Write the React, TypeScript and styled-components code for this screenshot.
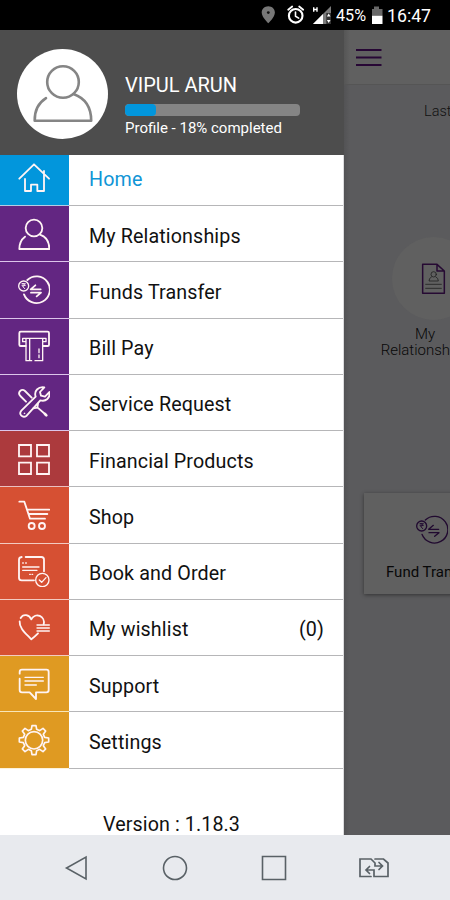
import React from "react";
import styled, { createGlobalStyle } from "styled-components";

const GlobalStyle = createGlobalStyle`
  * { box-sizing: border-box; }
  body { margin: 0; background: #000; font-family: Roboto, "Liberation Sans", sans-serif; }
`;

const Phone = styled.div`
  width: 450px;
  height: 900px;
  display: flex;
  flex-direction: column;
  overflow: hidden;
`;

const StatusBar = styled.header`
  height: 30px;
  flex: none;
  display: flex;
  align-items: center;
  background: #000;
  color: #fff;
  padding-left: 261px;
`;

const StatusText = styled.span<{ $width: number; $size: number }>`
  width: ${(p) => p.$width}px;
  font-size: ${(p) => p.$size}px;
  line-height: 30px;
  white-space: nowrap;
  padding-top: 2px;
`;

const Screen = styled.main`
  height: 805px;
  flex: none;
  display: flex;
`;

const Drawer = styled.aside`
  width: 344px;
  flex: none;
  display: flex;
  flex-direction: column;
  background: #fff;
  overflow: hidden;
`;

const Profile = styled.section`
  height: 125px;
  flex: none;
  display: flex;
  background: #4d4d4d;
  color: #fff;
  padding: 19px 0 0 17px;
`;

const Avatar = styled.div`
  width: 91px;
  height: 90px;
  border-radius: 50%;
  background: #fff;
`;

const ProfileInfo = styled.div`
  padding: 24px 0 0 17px;
`;

const Name = styled.div`
  font-size: 20px;
  line-height: 24px;
  height: 31px;
`;

const Track = styled.div`
  width: 175px;
  height: 12px;
  border-radius: 4px;
  background: #858585;
  overflow: hidden;
`;

const Progress = styled.div`
  width: 31px;
  height: 12px;
  border-radius: 4px;
  background: #0296dc;
`;

const Completed = styled.div`
  font-size: 15px;
  line-height: 18px;
  margin-top: 3px;
`;

const Menu = styled.nav`
  flex: none;
  overflow: hidden;
  border-right: 1px solid #dcdcde;
`;

const Row = styled.div`
  height: 56.25px;
  display: flex;
  &:first-child { margin-top: -5.25px; }
`;

const Tile = styled.div<{ $color: string; $line: string }>`
  width: 69px;
  display: flex;
  justify-content: center;
  align-items: center;
  padding-right: 1px;
  background: ${(p) => p.$color};
  border-bottom: 1px solid ${(p) => p.$line};
`;

const Label = styled.div<{ $active?: boolean }>`
  flex: 1;
  display: flex;
  justify-content: space-between;
  align-items: center;
  padding: 5px 19px 0 20px;
  font-size: 19.7px;
  letter-spacing: 0.12px;
  color: ${(p) => (p.$active ? "#1095d6" : "#111")};
  border-bottom: 1px solid #b6b6b8;
`;

const Version = styled.div`
  flex: 1;
  padding-top: 44px;
  text-align: center;
  font-size: 19.7px;
  line-height: 24px;
  letter-spacing: 0.1px;
  color: #111;
  border-right: 1px solid #dcdcde;
`;

const Backdrop = styled.section`
  flex: 1;
  min-width: 0;
  overflow: hidden;
  background: linear-gradient(90deg, #535355 0, #5b5b5d 6px);
`;

const AppBar = styled.div`
  height: 55px;
  padding: 18px 0 0 12px;
  background: linear-gradient(90deg, #565656 0, #606060 6px);
  border-bottom: 1px solid #555;
`;

const LastLogin = styled.div`
  padding: 18px 0 0 80px;
  height: 152px;
  font-size: 14.5px;
  line-height: 18px;
  font-weight: 300;
  white-space: nowrap;
  color: #111;
`;

const Shortcut = styled.div`
  width: 83px;
  height: 83px;
  border-radius: 50%;
  margin-left: 48px;
  background: #606060;
  display: flex;
  align-items: center;
  justify-content: center;
`;

const ShortcutText = styled.div`
  width: 100px;
  margin-left: 31px;
  padding-top: 6px;
  height: 173px;
  text-align: center;
  font-size: 15px;
  font-weight: 300;
  line-height: 16px;
  color: #080808;
`;

const Card = styled.div`
  width: 136px;
  height: 101px;
  margin-left: 20px;
  padding-top: 21px;
  background: #606060;
  box-shadow: 0 1px 4px rgba(0, 0, 0, 0.45);
  display: flex;
  flex-direction: column;
  align-items: center;
  font-size: 15px;
  color: #080808;
`;

const CardText = styled.div`
  line-height: 18px;
  padding-top: 17px;
  white-space: nowrap;
`;

const NavBar = styled.footer`
  height: 65px;
  flex: none;
  display: flex;
  align-items: center;
  justify-content: space-between;
  padding: 0 60px 0 61px;
  background: #e8eaee;
`;

const Glyph = styled.svg`
  display: block;
  flex: none;
  fill: none;
  stroke: currentColor;
  stroke-linecap: round;
  stroke-linejoin: round;
`;

const TileGlyph = styled(Glyph)`
  color: #fff4f4;
  stroke-width: 5.5;
`;

const TransferArt = () => (
  <>
    <path d="M83 55A40 40 0 1 1 73 98" />
    <circle cx="72" cy="73" r="15" strokeWidth="4" />
    <path d="M67 66h10M67 71h10M69 66c8 0 8 8 0 8l6 7" strokeWidth="2.8" />
    <path d="M123 83H93l14-12M94 93h30l-13 11" />
  </>
);

type Item = {
  label: string;
  color: string;
  line: string;
  top: number;
  art: React.ReactNode;
  count?: string;
};

const purple = { color: "#632682", line: "#dcc6ea" };
const orange = { color: "#d65033", line: "#f3cbc2" };
const amber = { color: "#df9a22", line: "#f8e6b8" };

const items: Item[] = [
  {
    label: "Home", color: "#0296dc", line: "#b3cce5", top: 34,
    art: <path d="M59 87 103 44l45 43M133 73v51h-20v-19H94v19H76V88M133 64v10" />,
  },
  {
    label: "My Relationships", ...purple, top: 204,
    art: (
      <>
        <circle cx="103" cy="234" r="25" />
        <path d="M76 260c-12 9-17 21-17 37h90c0-22-10-37-28-43" />
      </>
    ),
  },
  { label: "Funds Transfer", ...purple, top: 37, art: <TransferArt /> },
  {
    label: "Bill Pay", ...purple, top: 206,
    art: (
      <>
        <path d="M78 254H63q-4 0-4-4v-35q0-4 4-4h81q4 0 4 4v35q0 4-4 4h-14" />
        <path d="M78 241h-9v-10h70v10h-9M79 233v65h17M106 298h23v-65M90 233v64" strokeWidth="4" />
        <path d="M118 263v11M118 281v8" strokeWidth="4" />
      </>
    ),
  },
  {
    label: "Service Request", ...purple, top: 39,
    art: (
      <>
        <path d="M65 113 108 71c-6-17 8-31 26-28l-13 14 3 11 12 3 13-14c4 18-11 30-27 25L81 128c-12 9-25-4-16-15Z" />
        <path d="M79 86 62 69c-10-11 4-24 14-15l20 20M115 92l-2 12-12 2M114 104l22 19" />
        <path d="m136 123 4 4" strokeWidth="8" />
        <circle cx="74" cy="121" r="1" strokeWidth="3" />
      </>
    ),
  },
  {
    label: "Financial Products", color: "#ac3a3d", line: "#ebc0c2", top: 207,
    art: <path d="M58 213h36v34H58zM112 213h36v34h-36zM58 266h36v34H58zM112 266h36v34h-36z" strokeLinejoin="miter" />,
  },
  {
    label: "Shop", ...orange, top: 40,
    art: (
      <>
        <path d="M59 48h15l17 51h45M82 72h67M87 85h56" />
        <circle cx="96" cy="121" r="9" />
        <circle cx="127" cy="121" r="9" />
      </>
    ),
  },
  {
    label: "Book and Order", ...orange, top: 207,
    art: (
      <>
        <path d="M66 213q-8 1-8 8v54q0 8 8 8h37M78 213h47q8 0 8 8v35" />
        <path d="M69 231h2M78 231h2M69 243h49M69 253h43M90 265h2M97 265h2" strokeWidth="4" />
        <circle cx="128" cy="282" r="20" strokeWidth="4" />
        <path d="m119 282 7 7 13-14" strokeWidth="4" />
      </>
    ),
  },
  {
    label: "My wishlist", ...orange, top: 42, count: "(0)",
    art: (
      <>
        <path d="M63 63c8-14 26-10 32 4 12-23 43-9 37 15M60 73c-2 20 18 36 35 54q10-8 20-18" />
        <path d="M112 84h37M112 93h37M112 102h37" strokeWidth="4" />
      </>
    ),
  },
  {
    label: "Support", ...amber, top: 39,
    art: (
      <>
        <path d="M60 56v-5q0-7 7-7h73q7 0 7 7v54q0 7-7 7h-31v20l-19-20H67q-7 0-7-7V71" />
        <path d="M76 67h55M76 78h55M76 90h34" strokeWidth="4" />
      </>
    ),
  },
  {
    label: "Settings", color: "#df9a22", line: "#fdf3dc", top: 207,
    art: (
      <>
        <circle cx="103" cy="256" r="26" strokeWidth="5" />
        <path
          strokeWidth="5"
          d="M97 212h12l2 11 9 4 10-7 8 8-7 10 4 9 12 2v12l-12 2-4 9 7 10-8 8-10-7-9 4-2 12H97l-2-12-9-4-10 7-8-8 7-10-4-9-12-2v-12M71 247l4-9-7-10 8-8 10 7 9-4 2-11M60 249l11-2"
        />
      </>
    ),
  },
];

export default function App() {
  return (
    <Phone>
      <GlobalStyle />
      <StatusBar>
        <Glyph width="75" height="30" viewBox="261 0 75 30">
          <path d="M268.300 6.200c-3.800 0-6.600 2.800-6.600 6.300 0 4.600 6.600 10.800 6.600 10.800s6.600-6.200 6.600-10.800c0-3.500-2.800-6.300-6.600-6.300Z" fill="#777" stroke="none" />
          <circle cx="268.3" cy="12.6" r="1.4" fill="#111" stroke="none" />
          <circle cx="295.7" cy="15.8" r="6.8" strokeWidth="2.1" />
          <path d="M295.500 12v4.300l3.200 1.800" strokeWidth="1.6" />
          <path d="m288.200 9.800 4-3.300M303.200 9.800l-4-3.300" strokeWidth="1.8" />
          <path d="M331 6v18h-18Z" fill="#7b7b7b" stroke="none" />
          <path d="M323 14v10h-10Z" fill="#fff" stroke="none" />
          <path d="M326.300 13h4.700v11h-4.700z" fill="#333" stroke="none" />
          <path d="m328.700 13.500 1.800 3h-3.600zM328.700 23l1.800-3h-3.600z" fill="#fff" stroke="none" />
          <path d="M313.700 7.300v4.400M317 7.300v4.400M313.700 9.500h3.300" strokeWidth="1.4" strokeLinecap="butt" />
        </Glyph>
        <StatusText $width={35} $size={16.2}>45%</StatusText>
        <Glyph width="16" height="30" viewBox="371 0 16 30">
          <path d="M372 9h2V6.500h5V9h3.500v7H372z" fill="#686868" stroke="none" />
          <path d="M372 15.800h10.500V24H372z" fill="#fff" stroke="none" />
        </Glyph>
        <StatusText $width={50} $size={17.7}>16:47</StatusText>
      </StatusBar>
      <Screen>
        <Drawer>
          <Profile>
            <Avatar>
              <Glyph width="91" height="91" viewBox="17 49 91 91" color="#858585" strokeWidth="2.6">
                <circle cx="63" cy="82" r="15.8" />
                <path d="M46 98.200c-8 5-11.500 12-11.300 22.600h56.500c0-13-5.700-22.500-17.700-26.800" />
              </Glyph>
            </Avatar>
            <ProfileInfo>
              <Name>VIPUL ARUN</Name>
              <Track><Progress /></Track>
              <Completed>Profile - 18% completed</Completed>
            </ProfileInfo>
          </Profile>
          <Menu>
            {items.map((item, i) => (
              <Row key={item.label}>
                <Tile $color={item.color} $line={item.line}>
                  <TileGlyph width="32" height="32" viewBox={`55 ${item.top} 96 96`}>{item.art}</TileGlyph>
                </Tile>
                <Label $active={i === 0}>
                  <span>{item.label}</span>
                  {item.count && <span>{item.count}</span>}
                </Label>
              </Row>
            ))}
          </Menu>
          <Version>Version : 1.18.3</Version>
        </Drawer>
        <Backdrop>
          <AppBar>
            <Glyph width="26" height="20" viewBox="0 0 26 20" color="#270735" strokeWidth="2.2">
              <path d="M0 2h25.500M0 9.500h25.500M0 17h25.500" strokeLinecap="butt" />
            </Glyph>
          </AppBar>
          <LastLogin>Last Login</LastLogin>
          <Shortcut>
            <Glyph width="26" height="32" viewBox="246 130 78 96" color="#260a33" strokeWidth="4.5">
              <path d="M251 134h43v20h22v67h-65zM294 134l22 20" />
              <g strokeWidth="2.5" color="#222">
                <circle cx="284" cy="164" r="8" />
                <path d="M277 172q-7 3-7 12h28q0-9-7-12M260 194h47M260 206h47" />
              </g>
            </Glyph>
          </Shortcut>
          <ShortcutText>My Relationships</ShortcutText>
          <Card>
            <Glyph width="32" height="32" viewBox="55 37 96 96" color="#210a30" strokeWidth="4">
              <TransferArt />
            </Glyph>
            <CardText>Fund Transfer</CardText>
          </Card>
        </Backdrop>
      </Screen>
      <NavBar>
        <Glyph width="30" height="30" viewBox="0 0 30 30" color="#596166" strokeWidth="1.6">
          <path d="M25 4v22L5.500 15Z" strokeLinejoin="miter" />
        </Glyph>
        <Glyph width="30" height="30" viewBox="0 0 30 30" color="#596166" strokeWidth="1.6">
          <circle cx="15" cy="15" r="11.5" />
        </Glyph>
        <Glyph width="30" height="30" viewBox="0 0 30 30" color="#596166" strokeWidth="1.6">
          <path d="M3.500 3.500h23v23h-23z" strokeLinejoin="miter" />
        </Glyph>
        <Glyph width="32" height="30" viewBox="0 0 32 30" color="#596166" strokeWidth="1.7">
          <path d="M13 23.500H2V6h11l4 4v3h7M17 6h8.500l4.500 4v13.500H16V17H8.500M21 9.500l3.500 3.500-3.500 3.500M11.500 13.500 8 17l3.500 3.500" strokeLinejoin="miter" />
        </Glyph>
      </NavBar>
    </Phone>
  );
}
